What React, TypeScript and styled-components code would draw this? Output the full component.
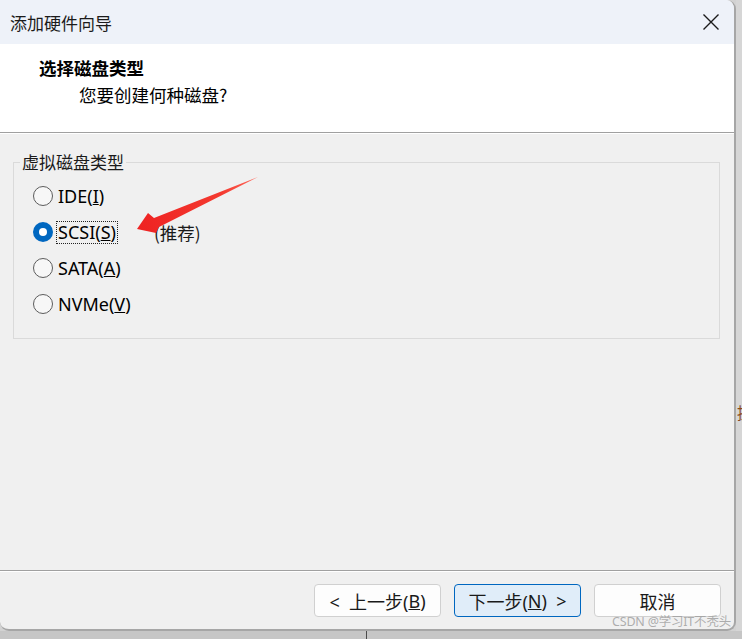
import React from "react";
import styled, { createGlobalStyle } from "styled-components";

const Global = createGlobalStyle`
  html, body { margin: 0; padding: 0; background: #cfcfcf; }
  body { font-family: "Noto Sans", "Noto Sans CJK SC", sans-serif; }
`;

const Desktop = styled.div`
  width: 742px;
  height: 639px;
  display: flex;
  flex-direction: column;
  background: #d2d2d2;
  overflow: hidden;
`;

const TopRow = styled.div`
  display: flex;
  height: 631px;
`;

const RightStrip = styled.div`
  flex: 1;
  background: #d6d6d6;
  display: flex;
  align-items: flex-start;
  padding-top: 402px;
  overflow: hidden;
`;

const EdgeGlyph = styled.span`
  font-family: "Noto Sans CJK SC", sans-serif;
  font-size: 16px;
  color: #8a4a1c;
  margin-left: 1px;
  line-height: 20px;
`;

const BottomStrip = styled.div`
  flex: 1;
  background: #c6c6c6;
  display: flex;
  padding-left: 366px;
`;

const VLine = styled.div`
  width: 1px;
  background: #4a4a4a;
`;

const Window = styled.div`
  position: relative;
  width: 734px;
  display: flex;
  flex-direction: column;
  background: #f0f0f0;
  border-right: 2px solid #a6a6a6;
  border-bottom: 2px solid #a6a6a6;
  border-radius: 0 9px 9px 9px;
  overflow: hidden;
`;

const TitleBar = styled.div`
  height: 44px;
  flex: none;
  display: flex;
  align-items: center;
  justify-content: space-between;
  background: #eef2f9;
  padding: 0 14px 0 10px;
  font-family: "Noto Sans CJK SC", sans-serif;
  font-size: 17px;
  color: #1b1b1b;
`;

const CloseBtn = styled.div`
  width: 18px;
  height: 18px;
  display: flex;
  align-items: center;
  justify-content: center;
`;

const Header = styled.div`
  height: 89px;
  flex: none;
  box-sizing: border-box;
  background: #ffffff;
  border-bottom: 1px solid #a0a0a0;
  box-shadow: 0 1px 0 #ffffff;
  display: flex;
  flex-direction: column;
  font-family: "Noto Sans CJK SC", sans-serif;
  color: #000;
`;

const HeaderTitle = styled.div`
  font-size: 17.5px;
  font-weight: 700;
  margin: 13px 0 0 39px;
  line-height: 22px;
`;

const HeaderSub = styled.div`
  font-size: 17.5px;
  margin: 5px 0 0 79px;
  line-height: 22px;
`;

const Body = styled.div`
  flex: 1;
  padding: 17px 14px 0 13px;
`;

const Group = styled.fieldset`
  margin: 0;
  padding: 4px 0 16px 19px;
  border: 1px solid #dadada;
  box-sizing: border-box;
`;

const Legend = styled.legend`
  font-family: "Noto Sans CJK SC", sans-serif;
  font-size: 17px;
  color: #1a1a1a;
  padding: 0 2px;
  margin-left: -13px;
  line-height: 24px;
`;

const RadioRow = styled.div`
  height: 36px;
  display: flex;
  align-items: center;
`;

const Circle = styled.div<{ $on?: boolean }>`
  width: 20px;
  height: 20px;
  flex: none;
  box-sizing: border-box;
  border-radius: 50%;
  border: ${(p) => (p.$on ? "none" : "1.5px solid #5c5c5c")};
  background: ${(p) => (p.$on ? "#0067c0" : "#f7f7f7")};
  display: flex;
  align-items: center;
  justify-content: center;
  margin-right: 4px;
  &::after {
    content: "";
    display: ${(p) => (p.$on ? "block" : "none")};
    width: 8px;
    height: 8px;
    border-radius: 50%;
    background: #fff;
  }
`;

const Label = styled.span<{ $focus?: boolean }>`
  font-family: "Noto Sans", "Noto Sans CJK SC", sans-serif;
  font-size: 18px;
  color: #000;
  line-height: 21px;
  padding: 0 1px;
  outline: ${(p) => (p.$focus ? "1px dotted #222" : "none")};
  outline-offset: 0px;
`;

const Note = styled.span`
  font-family: "Noto Sans CJK SC", sans-serif;
  font-size: 17.5px;
  color: #1a1a1a;
  margin-left: 37px;
`;

const Footer = styled.div`
  height: 59px;
  flex: none;
  box-sizing: border-box;
  border-top: 1px solid #a0a0a0;
  box-shadow: inset 0 1px 0 #ffffff;
  display: flex;
  justify-content: flex-end;
  align-items: flex-start;
  gap: 13px;
  padding: 13px 13px 0 0;
`;

const Button = styled.div<{ $primary?: boolean }>`
  width: 127px;
  height: 33px;
  box-sizing: border-box;
  border-radius: 4px;
  border: 1px solid ${(p) => (p.$primary ? "#0067c0" : "#d0d0d0")};
  background: ${(p) => (p.$primary ? "#e0edf9" : "#fdfdfd")};
  display: flex;
  align-items: center;
  justify-content: center;
  font-family: "Noto Sans", "Noto Sans CJK SC", sans-serif;
  font-size: 18px;
  color: #1a1a1a;
  white-space: pre;
`;

const Arrow = styled.svg`
  position: absolute;
  left: 0;
  top: 0;
  pointer-events: none;
`;

const Watermark = styled.div`
  position: absolute;
  right: 3px;
  bottom: 0px;
  font-family: "Noto Sans", "Noto Sans CJK SC", sans-serif;
  font-size: 12.5px;
  line-height: 15px;
  color: rgba(160, 160, 160, 0.85);
  letter-spacing: -0.2px;
  pointer-events: none;
`;

const radios = [
  { pre: "IDE(", key: "I", on: false },
  { pre: "SCSI(", key: "S", on: true },
  { pre: "SATA(", key: "A", on: false },
  { pre: "NVMe(", key: "V", on: false },
];

export default function App() {
  return (
    <>
      <Global />
      <Desktop>
        <TopRow>
          <Window>
            <TitleBar>
              <span>添加硬件向导</span>
              <CloseBtn>
                <svg width="18" height="18" viewBox="0 0 18 18">
                  <path d="M1.5 1.5 L16.5 16.5 M16.5 1.5 L1.5 16.5" stroke="#1a1a1a" strokeWidth="1.4" />
                </svg>
              </CloseBtn>
            </TitleBar>
            <Header>
              <HeaderTitle>选择磁盘类型</HeaderTitle>
              <HeaderSub>您要创建何种磁盘?</HeaderSub>
            </Header>
            <Body>
              <Group>
                <Legend>虚拟磁盘类型</Legend>
                {radios.map((r) => (
                  <RadioRow key={r.key}>
                    <Circle $on={r.on} />
                    <Label $focus={r.on}>
                      {r.pre}
                      <u>{r.key}</u>)
                    </Label>
                    {r.on && <Note>(推荐)</Note>}
                  </RadioRow>
                ))}
              </Group>
            </Body>
            <Footer>
              <Button>
                {"<  上一步("}<u>B</u>)
              </Button>
              <Button $primary>
                {"下一步("}<u>N</u>{")  >"}
              </Button>
              <Button>取消</Button>
            </Footer>
            <Arrow width="734" height="400" viewBox="0 0 734 400">
              <defs>
                <linearGradient id="ag" x1="258" y1="177" x2="137" y2="229" gradientUnits="userSpaceOnUse">
                  <stop offset="0" stopColor="#ff6a5c" />
                  <stop offset="0.3" stopColor="#f43a30" />
                  <stop offset="1" stopColor="#ee2222" />
                </linearGradient>
              </defs>
              <polygon
                points="137,229 148,213 154,218 258,177 159,227 156,233"
                fill="url(#ag)"
              />
            </Arrow>
            <Watermark>CSDN @学习IT不秃头</Watermark>
          </Window>
          <RightStrip>
            <EdgeGlyph>提</EdgeGlyph>
          </RightStrip>
        </TopRow>
        <BottomStrip>
          <VLine />
        </BottomStrip>
      </Desktop>
    </>
  );
}
